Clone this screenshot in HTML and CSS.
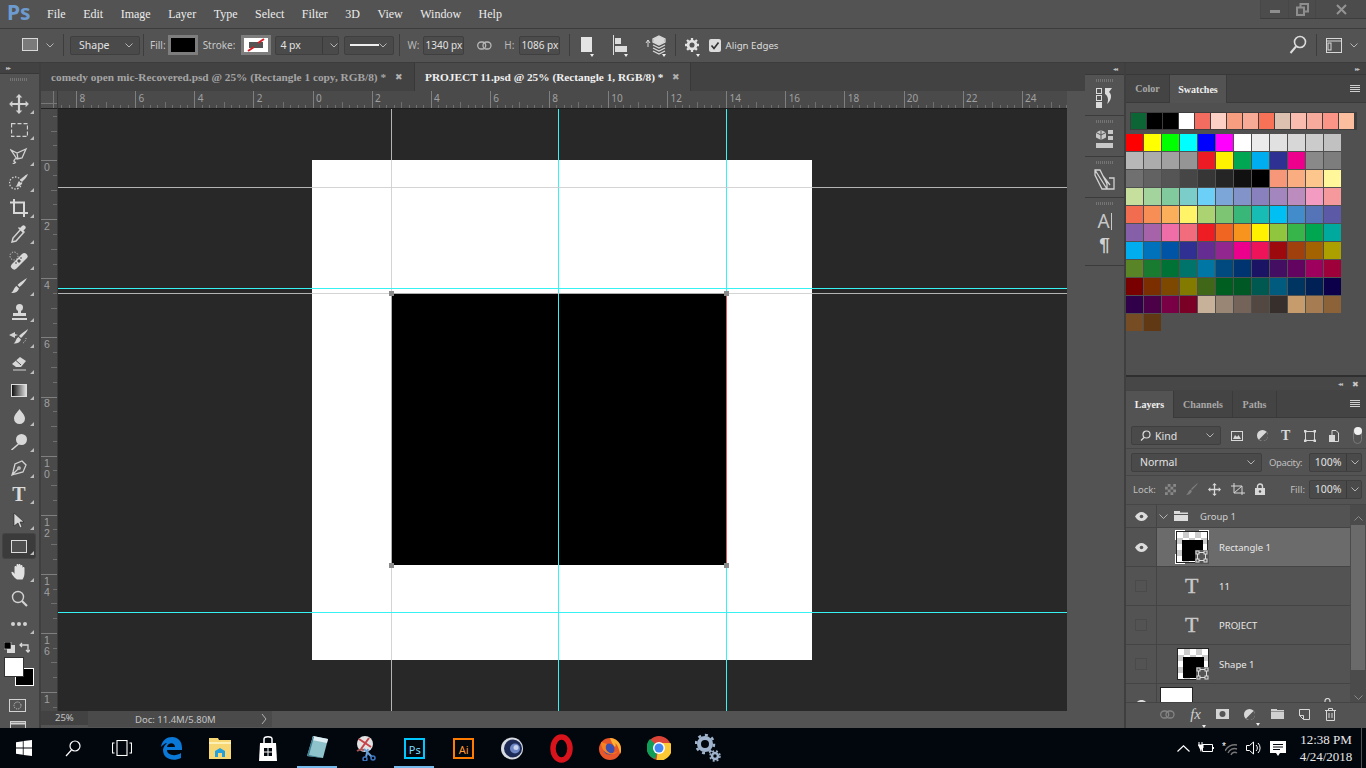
FILE: index.html
```html
<!DOCTYPE html>
<html lang="en">
<head>
<meta charset="utf-8">
<title>Photoshop</title>
<link rel="stylesheet" href="styles.css">
</head>
<body>
<div class="app">
  <header class="menubar">
    <div class="logo">Ps</div>
    <nav class="menu"><span>File</span><span>Edit</span><span>Image</span><span>Layer</span><span>Type</span><span>Select</span><span>Filter</span><span>3D</span><span>View</span><span>Window</span><span>Help</span></nav>
    <div class="winctl">
      <div class="wbtn wmin"><svg width="10" height="10" viewBox="0 0 10 10"><rect y="6" width="10" height="3" fill="#8e8e8e"/></svg></div>
      <div class="wbtn wres"><svg width="13" height="13" viewBox="0 0 13 13" fill="none" stroke="#8e8e8e" stroke-width="2"><rect x="4.500" y="1" width="7.500" height="7.500"/><rect x="1" y="4.500" width="7" height="7.500" fill="#535353"/></svg></div>
      <div class="wbtn wcls"><svg width="11" height="11" viewBox="0 0 11 11" stroke="#949494" stroke-width="2"><path d="M1 1l9 9M10 1l-9 9"/></svg></div>
    </div>
  </header>

  <section class="options">
    <svg class="opt-tool" width="17" height="14" viewBox="0 0 17 14"><rect x=".5" y=".5" width="15" height="12" fill="#7a7a7a" stroke="#d8d8d8"/></svg>
    <svg class="chev chev-tool" width="8" height="5" viewBox="0 0 8 5"><path d="M.5.5L4 4 7.500.5" fill="none" stroke="#b5b5b5"/></svg>
    <i class="sep sep-a"></i>
    <div class="field f-shape"><span>Shape</span><svg class="chev" width="8" height="5" viewBox="0 0 8 5"><path d="M.5.5L4 4 7.500.5" fill="none" stroke="#b5b5b5"/></svg></div>
    <i class="sep sep-b"></i>
    <span class="lbl l-fill">Fill:</span>
    <div class="colorbox cb-fill"></div>
    <span class="lbl l-stroke">Stroke:</span>
    <div class="colorbox cb-stroke"><svg width="24" height="14" viewBox="0 0 24 14"><rect width="24" height="14" fill="#fff"/><rect x="5" y="4" width="14" height="6" fill="#555"/><path d="M4 13l6-4M14 5l6-4" stroke="#d81f26" stroke-width="2"/></svg></div>
    <div class="field f-px"><span>4 px</span><b></b><svg class="chev" width="8" height="5" viewBox="0 0 8 5"><path d="M.5.5L4 4 7.500.5" fill="none" stroke="#b5b5b5"/></svg></div>
    <div class="field f-line"><u></u><svg class="chev" width="8" height="5" viewBox="0 0 8 5"><path d="M.5.5L4 4 7.500.5" fill="none" stroke="#b5b5b5"/></svg></div>
    <i class="sep sep-c"></i>
    <span class="lbl l-w">W:</span>
    <div class="field f-num f-w"><span>1340 px</span></div>
    <svg class="link-ic" width="15" height="9" viewBox="0 0 15 9" fill="none" stroke="#b8b8b8" stroke-width="1.300"><rect x=".7" y="1" width="8" height="7" rx="3.500"/><rect x="6" y="1" width="8" height="7" rx="3.500"/></svg>
    <span class="lbl l-h">H:</span>
    <div class="field f-num f-h"><span>1086 px</span></div>
    <i class="sep sep-d"></i>
    <div class="opt-ic oi-a"><svg width="11" height="16" viewBox="0 0 11 16"><rect width="11" height="15" fill="#e4e4e4"/></svg><em></em></div>
    <div class="opt-ic oi-b"><svg width="14" height="20" viewBox="0 0 14 20" fill="#dcdcdc"><rect width="1" height="20"/><rect x="2" y="3" width="6" height="6"/><rect x="2" y="11" width="12" height="6"/></svg><em></em></div>
    <div class="opt-ic oi-c"><svg width="22" height="20" viewBox="0 0 22 20" fill="none" stroke="#d8d8d8"><path d="M1 8l2-3 2 3M3 5v7" stroke-width="1"/><path d="M14 1l6 3v3l-6 3-6-3V4zM8 10l6 3 6-3M8 13l6 3 6-3M8 16l6 3 6-3" stroke-width="1.300"/><path d="M9 4l5-2.500L19 4v3l-5 2.500L9 7z" fill="#d8d8d8"/></svg><em></em></div>
    <i class="sep sep-e"></i>
    <div class="opt-ic oi-d"><svg width="14" height="16" viewBox="0 0 16 16"><circle cx="8" cy="8" r="4.500" fill="none" stroke="#e2e2e2" stroke-width="3.200"/><path d="M8 0v16M0 8h16M2.300 2.300l11.400 11.400M13.700 2.300L2.300 13.700" stroke="#e2e2e2" stroke-width="2.600" stroke-dasharray="2.500 11"/></svg><em></em></div>
    <svg class="chk" width="12" height="13" viewBox="0 0 12 13"><rect width="12" height="13" rx="2" fill="#dcdcdc"/><path d="M2.500 6.500l2.500 3 4.500-6" fill="none" stroke="#333" stroke-width="1.700"/></svg>
    <span class="lbl l-align">Align Edges</span>
    <div class="opt-right">
      <svg width="18" height="20" viewBox="0 0 18 20" fill="none" stroke="#dcdcdc" stroke-width="1.600"><circle cx="11" cy="7" r="5.500"/><path d="M7 11.500L1.500 18" stroke-width="2"/></svg>
      <i class="sep sep-f"></i>
      <svg width="16" height="15" viewBox="0 0 16 15" fill="none" stroke="#d8d8d8"><rect x=".5" y=".5" width="15" height="14"/><rect x="2" y="5" width="3" height="7" stroke-width="1"/><path d="M.5 3h15"/></svg>
      <svg class="chev" width="8" height="5" viewBox="0 0 8 5"><path d="M.5.5L4 4 7.500.5" fill="none" stroke="#b5b5b5"/></svg>
    </div>
  </section>

  <main class="work">
    <aside class="tools">
      <div class="strip"><span class="arrows">▸▸</span></div>
      <div class="grip"></div>
      <div class="tool more"><svg width="22" height="22" viewBox="0 0 20 20" fill="#d2d2d2"><path d="M10 1l3 3h-2v5h5V7l3 3-3 3v-2h-5v5h2l-3 3-3-3h2v-5H4v2l-3-3 3-3v2h5V4H7z"/></svg></div>
      <div class="tool more"><svg width="17" height="14" viewBox="0 0 17 14" fill="none" stroke="#d2d2d2"><rect x=".5" y=".5" width="16" height="13" stroke-dasharray="4 2" stroke-width="1.300"/></svg></div>
      <div class="tool more"><svg width="18" height="18" viewBox="0 0 18 18" fill="none" stroke="#d2d2d2" stroke-width="1.300"><path d="M1 3l6 3 9-4-4 9-5 1zM7 11c-3 1-4 4-2 4 2 1-2 1-2 2M7 6l1 6"/></svg></div>
      <div class="tool more"><svg width="20" height="19" viewBox="0 0 20 19"><circle cx="6.500" cy="10" r="6" fill="none" stroke="#d2d2d2" stroke-dasharray="1.500 1.500" stroke-width="1.300"/><path d="M19 1c-1 3-4 6-6 8l-2-2c2-2 5-5 8-6zM10 8l2.500 2.500c-1 3-4 3.500-6 3 2-1 2-4 3.500-5.500z" fill="#d2d2d2"/></svg></div>
      <div class="tool more"><svg width="18" height="18" viewBox="0 0 18 18" fill="none" stroke="#d8d8d8" stroke-width="2"><path d="M0 3.500h14V18M4 0v14h14"/></svg></div>
      <div class="tool more"><svg width="16" height="18" viewBox="0 0 16 18"><path d="M10 4l3 3-8 9-4 1 1-4z" fill="none" stroke="#d2d2d2" stroke-width="1.500"/><path d="M9 3l2-2c1-1 2-1 3 0s1 2 0 3l-2 2 1 1-1 1-5-5 1-1z" fill="#d8d8d8"/></svg></div>
      <div class="tool more"><svg width="20" height="19" viewBox="0 0 20 19"><circle cx="5" cy="5" r="4" fill="none" stroke="#d2d2d2" stroke-dasharray="1.200 1.500"/><path d="M3 13L13 3c1.500-1.500 3-1.500 4.500 0s1.500 3 0 4.500L7.500 17.500C6 19 4.500 19 3 17.500s-1.500-3 0-4.500z" fill="#d8d8d8"/><path d="M8 10l2-2 2 2-2 2zM6 12l1-1 1 1-1 1zM11 7l1-1 1 1-1 1z" fill="#4c4c4c"/></svg></div>
      <div class="tool more"><svg width="16" height="16" viewBox="0 0 16 16" fill="#d8d8d8"><path d="M16 0c-1.500 3-5 7-7.500 9L6.500 7C9 4.500 13 1.500 16 0zM5.500 8L8 10.500C7 14 3.500 15.500 0 15c2.500-1 2.500-5 5.500-7z"/></svg></div>
      <div class="tool more"><svg width="15" height="16" viewBox="0 0 15 16" fill="#d8d8d8"><circle cx="7.500" cy="3.500" r="3.500"/><rect x="6" y="5" width="3" height="5"/><rect x="1" y="9" width="13" height="3"/><rect y="14" width="15" height="2"/></svg></div>
      <div class="tool more"><svg width="20" height="18" viewBox="0 0 20 18"><path d="M19 0c-1 3-5 7-7 9l-2-2c2-2 6-5 9-7zM9.500 8l2.500 2.500c-1 3-4 4.500-7.500 4 2.500-1 2-5 5-6.500z" fill="#d8d8d8"/><path d="M0 6l6-3v2l3 1-3 1v2z" fill="#d2d2d2"/><path d="M14 14a6 6 0 0 0 3-6" stroke="#d2d2d2" stroke-dasharray="1 1.500" fill="none"/></svg></div>
      <div class="tool more"><svg width="16" height="14" viewBox="0 0 16 14"><path d="M9 0l6 4-5 6H5L1 7z" fill="#d8d8d8"/><path d="M5 3.500L10 8" stroke="#4c4c4c" stroke-width="1"/><path d="M2 13h13" stroke="#d2d2d2"/></svg></div>
      <div class="tool more"><div class="gradient-ic"></div></div>
      <div class="tool more"><svg width="11" height="15" viewBox="0 0 11 15" fill="#d8d8d8"><path d="M5.500 0c2 3 5.500 6 5.500 9.500a5.500 5.500 0 0 1-11 0C0 6 3.500 3 5.500 0z"/></svg></div>
      <div class="tool more"><svg width="16" height="16" viewBox="0 0 16 16" fill="#d8d8d8"><circle cx="10.500" cy="5.500" r="5.500"/><path d="M7 9.500l1 1-7 6-1-1z"/></svg></div>
      <div class="tool more"><svg width="16" height="16" viewBox="0 0 16 16" fill="none" stroke="#d2d2d2" stroke-width="1.300"><path d="M11 1l4 4-3 7-8 2-3 1 1-3 2-8zM2 14l5-5"/><circle cx="8" cy="8" r="1.200"/></svg></div>
      <div class="tool more"><span class="t-glyph">T</span></div>
      <div class="tool more"><svg width="12" height="16" viewBox="0 0 12 16" fill="#d8d8d8" stroke="#222" stroke-width=".6"><path d="M1 1l10 9H7l2 5-2 1-2-5-4 3z"/></svg></div>
      <div class="tool more active"><svg width="16" height="13" viewBox="0 0 16 13"><rect x=".5" y=".5" width="15" height="12" fill="#4f4f4f" stroke="#dcdcdc"/></svg></div>
      <div class="tool more"><svg width="17" height="18" viewBox="0 0 17 18" fill="#e0e0e0"><path d="M4 15C2 13 0 10 .5 9c.7-.8 2 0 3 2V4c0-1.500 2-1.500 2 0V2c0-1.500 2-1.500 2 0v0c0-1.500 2-1.500 2 0v1c0-1.500 2-1.500 2 0v2c0-1.500 2-1.500 2 0v5c0 3-1 5-2 6.500H6z"/></svg></div>
      <div class="tool"><svg width="17" height="17" viewBox="0 0 17 17" fill="none" stroke="#d2d2d2"><circle cx="7" cy="7" r="5.500" stroke-width="1.400"/><path d="M11 11l5 5" stroke-width="2.200"/></svg></div>
      <div class="tool more"><svg width="16" height="4" viewBox="0 0 16 4" fill="#d2d2d2"><circle cx="2" cy="2" r="2"/><circle cx="8" cy="2" r="2"/><circle cx="14" cy="2" r="2"/></svg></div>
      <div class="swaprow">
        <svg width="11" height="11" viewBox="0 0 11 11"><rect x="3" y="3" width="8" height="8" fill="#d8d8d8"/><rect width="7" height="7" fill="#000" stroke="#ddd" stroke-width=".6"/></svg>
        <svg width="11" height="11" viewBox="0 0 11 11" fill="none" stroke="#d8d8d8"><path d="M1 3h8v7M3 1L1 3l2 2M7 8l2 2 2-2" stroke-width="1.300"/></svg>
      </div>
      <div class="fgbg"><div class="bgc"></div><div class="fgc"></div></div>
      <div class="mask-ic"><svg width="17" height="13" viewBox="0 0 17 13" fill="none" stroke="#d2d2d2"><rect x=".5" y=".5" width="16" height="12"/><circle cx="8.500" cy="6.500" r="3.500" stroke-dasharray="1 1"/></svg></div>
      <div class="screen-ic"><svg width="16" height="12" viewBox="0 0 16 12" fill="none" stroke="#d2d2d2"><rect x=".5" y=".5" width="15" height="11"/><path d="M1 2.500h14" stroke-width="2"/></svg></div>
    </aside>

    <section class="doc">
      <div class="tabs">
        <div class="tab"><span>comedy open mic-Recovered.psd @ 25% (Rectangle 1 copy, RGB/8) *</span><b>✖</b></div>
        <div class="tab on"><span>PROJECT 11.psd @ 25% (Rectangle 1, RGB/8) *</span><b>✖</b></div>
      </div>
      <div class="hrow">
        <div class="corner"></div>
        <div class="hruler"><div class="hscale">
          <span></span><span>8</span><span>6</span><span>4</span><span>2</span><span>0</span><span>2</span><span>4</span><span>6</span><span>8</span><span>10</span><span>12</span><span>14</span><span>16</span><span>18</span><span>20</span><span>22</span><span>24</span>
        </div></div>
        <div class="lane"></div>
      </div>
      <div class="vrow">
        <div class="vruler"><div class="vscale">
          <span></span><span>0</span><span>2</span><span>4</span><span>6</span><span>8</span><span>1<br>0</span><span>1<br>2</span><span>1<br>4</span><span>1<br>6</span><span>1</span>
        </div></div>
        <div class="canvas">
          <div class="paper"><div class="shape"></div></div>
          <i class="gv gg x1"></i><i class="gv gc x2"></i><i class="gv gc x3"></i>
          <i class="gh gg y1"></i><i class="gh gc y2"></i><i class="gh gg y3"></i><i class="gh gc y4"></i>
          <i class="path-edge"></i>
          <i class="hdl h1"></i><i class="hdl h2"></i><i class="hdl h3"></i><i class="hdl h4"></i>
        </div>
        <div class="lane"></div>
      </div>
      <div class="status">
        <div class="zoomv">25%</div>
        <div class="docinfo"><span>Doc: 11.4M/5.80M</span><svg width="6" height="12" viewBox="0 0 6 12"><path d="M1 1l4 5-4 5" fill="none" stroke="#b0b0b0"/></svg></div>
      </div>
    </section>

    <aside class="dock">
      <div class="strip dockstrip"><span class="arrows">◂◂</span></div>
      <div class="dgroup"><div class="grip"></div><svg width="20" height="21" viewBox="0 0 20 21"><g fill="none" stroke="#dcdcdc"><rect x="1.500" y="1.500" width="5" height="5"/><rect x="1.500" y="8.500" width="5" height="5"/></g><rect x="1" y="15" width="6" height="6" fill="#dcdcdc"/><path d="M10 1h7l-3 4c3 2 3 8-2 12 2-4 1-8-2-10z" fill="#dcdcdc"/></svg></div>
      <div class="dgroup"><div class="grip"></div><svg width="17" height="22" viewBox="0 0 17 22" fill="#c8c8c8"><path d="M5 2l5 2.500v5L5 12 0 9.500v-5z"/><path d="M5 2v10M0 4.500l5 2.500 5-2.500" stroke="#555" fill="none"/><rect x="12" y="2" width="5" height="4"/><rect x="12" y="8" width="5" height="4"/><rect y="15" width="17" height="5"/></svg></div>
      <div class="dgroup"><div class="grip"></div><svg width="22" height="21" viewBox="0 0 22 21" fill="none" stroke="#d2d2d2" stroke-width="1.300"><path d="M1 1h5l7 14v5H8L1 6zM1 1l12 19M9 7l7 9M15 9h5v11h-7"/></svg></div>
      <div class="dgroup dtxt"><div class="grip"></div><div class="aglyph">A<i></i></div><div class="pil">¶</div></div>
    </aside>

    <aside class="panels">
      <div class="strip panstrip"><span class="arrows">▸▸</span></div>
      <div class="ptabs">
        <span class="ptab pt-color">Color</span><span class="ptab pt-swatch on">Swatches</span>
        <div class="hamb"><i></i><i></i><i></i><i></i></div>
      </div>
      <div class="swatches">
        <div class="recent">
          <i style="background:#0b6534"></i><i style="background:#000"></i><i style="background:#000"></i><i style="background:#fff"></i><i style="background:#f26c5f"></i><i style="background:#fcd0c4"></i><i style="background:#f79d80"></i><i style="background:#f7aa95"></i><i style="background:#f87258"></i><i style="background:#dcc0b0"></i><i style="background:#fbbcb0"></i><i style="background:#f7ab9c"></i><i style="background:#fa9587"></i><i style="background:#fbbfa0"></i>
        </div>
        <div class="swgrid">
          <i style="background:#f00"></i><i style="background:#ff0"></i><i style="background:#0f0"></i><i style="background:#0ff"></i><i style="background:#00f"></i><i style="background:#f0f"></i><i style="background:#fff"></i><i style="background:#ebebeb"></i><i style="background:#e1e1e1"></i><i style="background:#d7d7d7"></i><i style="background:#cbcbcb"></i><i style="background:#c1c1c1"></i>
          <i style="background:#b7b7b7"></i><i style="background:#acacac"></i><i style="background:#a1a1a1"></i><i style="background:#959595"></i><i style="background:#ed1c24"></i><i style="background:#fff200"></i><i style="background:#00a651"></i><i style="background:#00aeef"></i><i style="background:#2e3192"></i><i style="background:#ec008c"></i><i style="background:#898989"></i><i style="background:#7d7d7d"></i>
          <i style="background:#707070"></i><i style="background:#626262"></i><i style="background:#555"></i><i style="background:#464646"></i><i style="background:#363636"></i><i style="background:#252525"></i><i style="background:#111"></i><i style="background:#000"></i><i style="background:#f7977a"></i><i style="background:#fbad82"></i><i style="background:#fdc68c"></i><i style="background:#fff799"></i>
          <i style="background:#c6df9c"></i><i style="background:#a4d49d"></i><i style="background:#81ca9d"></i><i style="background:#7bcdc9"></i><i style="background:#6ccff7"></i><i style="background:#7ca6d8"></i><i style="background:#8293ca"></i><i style="background:#8881be"></i><i style="background:#a286bd"></i><i style="background:#bc8cbf"></i><i style="background:#f49bc1"></i><i style="background:#f5999d"></i>
          <i style="background:#f26c4f"></i><i style="background:#f68e55"></i><i style="background:#fbaf5a"></i><i style="background:#fff467"></i><i style="background:#acd372"></i><i style="background:#7dc473"></i><i style="background:#39b778"></i><i style="background:#17bcb4"></i><i style="background:#00bff3"></i><i style="background:#438ccb"></i><i style="background:#5573b7"></i><i style="background:#5c5aa7"></i>
          <i style="background:#855fa8"></i><i style="background:#a763a9"></i><i style="background:#ef6ea8"></i><i style="background:#f16d7e"></i><i style="background:#ee1d24"></i><i style="background:#f16522"></i><i style="background:#f7941d"></i><i style="background:#fff100"></i><i style="background:#8fc63d"></i><i style="background:#37b44a"></i><i style="background:#00a650"></i><i style="background:#00a99e"></i>
          <i style="background:#00aeef"></i><i style="background:#0072bc"></i><i style="background:#0054a5"></i><i style="background:#2f3091"></i><i style="background:#652c91"></i><i style="background:#91278f"></i><i style="background:#ec008c"></i><i style="background:#ed145a"></i><i style="background:#9d0a0e"></i><i style="background:#a0410d"></i><i style="background:#a26300"></i><i style="background:#aba000"></i>
          <i style="background:#598527"></i><i style="background:#197b30"></i><i style="background:#007236"></i><i style="background:#00736a"></i><i style="background:#0076a4"></i><i style="background:#004a80"></i><i style="background:#003471"></i><i style="background:#1b1464"></i><i style="background:#440e62"></i><i style="background:#630460"></i><i style="background:#9e005d"></i><i style="background:#9e0039"></i>
          <i style="background:#790000"></i><i style="background:#7b2e00"></i><i style="background:#7d4900"></i><i style="background:#827b00"></i><i style="background:#406618"></i><i style="background:#005e20"></i><i style="background:#005825"></i><i style="background:#005951"></i><i style="background:#005b7e"></i><i style="background:#003562"></i><i style="background:#002056"></i><i style="background:#0c004b"></i>
          <i style="background:#30004a"></i><i style="background:#4b0048"></i><i style="background:#7a0045"></i><i style="background:#7a0026"></i><i style="background:#c7b299"></i><i style="background:#998675"></i><i style="background:#736358"></i><i style="background:#534741"></i><i style="background:#362f2c"></i><i style="background:#c69c6d"></i><i style="background:#a67c52"></i><i style="background:#8c6239"></i>
          <i style="background:#754c24"></i><i style="background:#603813"></i>
        </div>
      </div>
      <div class="splitter"></div>
      <div class="layhead"><span class="arrows">◂◂</span><b>✖</b></div>
      <div class="ptabs laytabs">
        <span class="ptab pt-layers on">Layers</span><span class="ptab pt-chan">Channels</span><span class="ptab pt-paths">Paths</span>
        <div class="hamb"><i></i><i></i><i></i><i></i></div>
      </div>
      <div class="lay-filter">
        <div class="field f-kind"><svg width="11" height="11" viewBox="0 0 11 11" fill="none" stroke="#dcdcdc" stroke-width="1.200"><circle cx="6.500" cy="4.500" r="3.500"/><path d="M4 7.500L1 10.500"/></svg><span>Kind</span><svg class="chev" width="8" height="5" viewBox="0 0 8 5"><path d="M.5.5L4 4 7.500.5" fill="none" stroke="#b5b5b5"/></svg></div>
        <div class="kinds">
          <svg width="12" height="10" viewBox="0 0 12 10"><rect x=".5" y=".5" width="11" height="9" fill="none" stroke="#d8d8d8"/><path d="M2 8l2-4 2 2 1.500-2L10 8z" fill="#d8d8d8"/></svg>
          <svg width="11" height="11" viewBox="0 0 11 11"><circle cx="5.500" cy="5.500" r="5.500" fill="#d8d8d8"/><path d="M2 9.500L9.500 2a5 5 0 0 1-7.500 7.500z" fill="#555"/></svg>
          <span class="kt">T</span>
          <svg width="12" height="12" viewBox="0 0 12 12" fill="none" stroke="#d8d8d8"><rect x="1.500" y="1.500" width="9" height="9"/><g fill="#d8d8d8" stroke="none"><rect width="2.500" height="2.500"/><rect x="9.500" width="2.500" height="2.500"/><rect y="9.500" width="2.500" height="2.500"/><rect x="9.500" y="9.500" width="2.500" height="2.500"/></g></svg>
          <svg width="10" height="12" viewBox="0 0 10 12"><path d="M3 .5h4l2.500 2.500v8.500H3z" fill="none" stroke="#d8d8d8"/><rect y="5" width="6" height="7" fill="#d8d8d8"/></svg>
        </div>
        <div class="toggle"><i></i></div>
      </div>
      <div class="lay-blend">
        <div class="field f-normal"><span>Normal</span><svg class="chev" width="8" height="5" viewBox="0 0 8 5"><path d="M.5.5L4 4 7.500.5" fill="none" stroke="#b5b5b5"/></svg></div>
        <span class="lbl2 op">Opacity:</span>
        <div class="field f-pct"><span>100%</span><b></b><svg class="chev" width="8" height="5" viewBox="0 0 8 5"><path d="M.5.5L4 4 7.500.5" fill="none" stroke="#b5b5b5"/></svg></div>
      </div>
      <div class="lay-lock">
        <span class="lbl2 lk">Lock:</span>
        <div class="locks">
          <i class="checker lk-c"></i>
          <svg width="12" height="12" viewBox="0 0 12 12" fill="#7d7d7d"><path d="M12 0C11 2 8 5 6 7L5 6c2-2 5-5 7-6zM4.500 6.500L6 8c-1 2.500-3 4-6 4 2-1 2-4 4.500-5.500z"/></svg>
          <svg width="13" height="13" viewBox="0 0 20 20" fill="#d8d8d8"><path d="M10 0l3.500 3.500H11V9h5.500V6.500L20 10l-3.500 3.500V11H11v5.500h2.500L10 20l-3.500-3.500H9V11H3.500v2.500L0 10l3.500-3.500V9H9V3.500H6.500z"/></svg>
          <svg width="14" height="13" viewBox="0 0 14 13" fill="none" stroke="#d8d8d8"><path d="M0 3h11v9M3 0v10h11" stroke-width="1"/><path d="M3 10l8-7" stroke-width="1"/></svg>
          <svg width="10" height="12" viewBox="0 0 10 12"><path d="M2.500 6V3.500a2.500 2.500 0 0 1 5 0V6" fill="none" stroke="#d8d8d8" stroke-width="1.400"/><rect y="5" width="10" height="7" fill="#d8d8d8"/><circle cx="5" cy="8.500" r="1.200" fill="#555"/></svg>
        </div>
        <span class="lbl2 fl">Fill:</span>
        <div class="field f-pct"><span>100%</span><b></b><svg class="chev" width="8" height="5" viewBox="0 0 8 5"><path d="M.5.5L4 4 7.500.5" fill="none" stroke="#b5b5b5"/></svg></div>
      </div>
      <div class="lay-list">
        <div class="rows">
          <div class="lrow group">
            <div class="vis"><svg class="eye" width="13" height="9" viewBox="0 0 13 9"><path d="M0 4.500C2 1.500 4 0 6.500 0S11 1.500 13 4.500C11 7.500 9 9 6.500 9S2 7.500 0 4.500z" fill="#dcdcdc"/><circle cx="6.500" cy="4.500" r="1.800" fill="#555"/></svg></div>
            <svg class="chev gchev" width="9" height="5" viewBox="0 0 9 5"><path d="M.5.500L4.500 4.500 8.500.5" fill="none" stroke="#b5b5b5"/></svg>
            <svg class="folder" width="14" height="10" viewBox="0 0 14 10" fill="#dcdcdc"><path d="M0 0h6v1.500h8V3H0zM0 4h14v6H0z"/></svg>
            <span class="lname gname">Group 1</span>
          </div>
          <div class="lrow tall sel">
            <div class="vis"><svg class="eye" width="13" height="9" viewBox="0 0 13 9"><path d="M0 4.500C2 1.500 4 0 6.500 0S11 1.500 13 4.500C11 7.500 9 9 6.500 9S2 7.500 0 4.500z" fill="#dcdcdc"/><circle cx="6.500" cy="4.500" r="1.800" fill="#555"/></svg></div>
            <div class="thumbwrap sel-th"><div class="thumb"><i class="blk"></i></div><em class="smark"><svg width="13" height="13" viewBox="0 0 13 13" fill="none" stroke="#ddd"><rect x="2.500" y="2.500" width="8" height="8"/><g fill="#555"><rect x="1" y="1" width="3" height="3"/><rect x="9" y="1" width="3" height="3"/><rect x="1" y="9" width="3" height="3"/><rect x="9" y="9" width="3" height="3"/></g></svg></em></div>
            <span class="lname">Rectangle 1</span>
          </div>
          <div class="lrow tall">
            <div class="vis"><i class="vbox"></i></div>
            <span class="tglyph">T</span>
            <span class="lname">11</span>
          </div>
          <div class="lrow tall">
            <div class="vis"><i class="vbox"></i></div>
            <span class="tglyph">T</span>
            <span class="lname">PROJECT</span>
          </div>
          <div class="lrow tall">
            <div class="vis"><i class="vbox"></i></div>
            <div class="thumbwrap plain"><div class="thumb"><i class="blk"></i></div><em class="smark"><svg width="13" height="13" viewBox="0 0 13 13" fill="none" stroke="#ddd"><rect x="2.500" y="2.500" width="8" height="8"/><g fill="#555"><rect x="1" y="1" width="3" height="3"/><rect x="9" y="1" width="3" height="3"/><rect x="1" y="9" width="3" height="3"/><rect x="9" y="9" width="3" height="3"/></g></svg></em></div>
            <span class="lname">Shape 1</span>
          </div>
          <div class="lrow tall last">
            <div class="vis vis-end"><svg class="eye" width="13" height="9" viewBox="0 0 13 9"><path d="M0 4.500C2 1.500 4 0 6.500 0S11 1.500 13 4.500C11 7.500 9 9 6.500 9S2 7.500 0 4.500z" fill="#dcdcdc"/></svg></div>
            <div class="whitethumb"></div>
            <svg class="minilock" width="9" height="10" viewBox="0 0 9 10"><path d="M2 5V3a2.500 2.500 0 0 1 5 0v2" fill="none" stroke="#d8d8d8" stroke-width="1.200"/></svg>
          </div>
        </div>
        <div class="lscroll">
          <svg width="9" height="5" viewBox="0 0 9 5"><path d="M.5 4.500L4.500.5 8.500 4.500" fill="none" stroke="#888"/></svg>
          <div class="thumbbar"></div>
          <svg width="9" height="5" viewBox="0 0 9 5"><path d="M.5.500L4.500 4.500 8.500.5" fill="none" stroke="#888"/></svg>
        </div>
      </div>
      <div class="lay-foot">
        <svg width="15" height="9" viewBox="0 0 15 9" fill="none" stroke="#858585" stroke-width="1.300"><rect x=".7" y="1" width="8" height="7" rx="3.500"/><rect x="6" y="1" width="8" height="7" rx="3.500"/></svg>
        <span class="fx drop">fx</span>
        <svg width="13" height="10" viewBox="0 0 13 10"><rect width="13" height="10" fill="#d4d4d4"/><circle cx="6.500" cy="5" r="3" fill="#555"/></svg>
        <span class="adj drop"><svg width="11" height="11" viewBox="0 0 11 11"><circle cx="5.500" cy="5.500" r="5.500" fill="#d8d8d8"/><path d="M2 9.500L9.500 2a5 5 0 0 1-7.500 7.500z" fill="#555"/></svg></span>
        <svg width="13" height="10" viewBox="0 0 13 10" fill="#d0d0d0"><path d="M0 0h6v1h7v1H0zM0 2.500h13V10H0z"/></svg>
        <svg width="11" height="11" viewBox="0 0 11 11" fill="none" stroke="#d8d8d8"><path d="M.5.500h10v10h-6l-4-4z"/><path d="M4.500 10.500v-4h-4"/></svg>
        <svg width="11" height="13" viewBox="0 0 11 13" fill="none" stroke="#d8d8d8"><path d="M1.500 3v9.500h8V3M0 2.500h11M3.500 2V.5h4V2M4 5v5M7 5v5"/></svg>
      </div>
    </aside>
  </main>

  <footer class="taskbar">
    <div class="tb"><svg width="16" height="16" viewBox="0 0 16 16" fill="#fff"><path d="M0 2.200l6.800-1v6.400H0zM7.600 1.100L16 0v7.600H7.600zM0 8.400h6.800v6.400l-6.800-1zM7.600 8.400H16V16l-8.400-1.100z"/></svg></div>
    <div class="tb"><svg width="16" height="17" viewBox="0 0 16 17" fill="none" stroke="#fff" stroke-width="1.200"><circle cx="10" cy="6" r="5"/><path d="M6.500 10L1 16"/></svg></div>
    <div class="tb"><svg width="20" height="16" viewBox="0 0 20 16" fill="none" stroke="#fff" stroke-width="1.100"><rect x="5" y=".5" width="10" height="15"/><path d="M2.500 3H.5v10h2M17.500 3h2v10h-2"/></svg></div>
    <div class="tb"><svg width="22" height="24" viewBox="0 0 22 24"><path d="M1 11C2 4 7 1 12 1c6 0 10 4 10 11v2H7c0 5 8 7 14 3v5c-8 4-18 1-18-8 0-3 2-5 4-7-2 0-4 2-6 4zm6 0h8c0-5-7-5-8 0z" fill="#0a78d7"/></svg></div>
    <div class="tb"><svg width="22" height="22" viewBox="0 0 22 22"><path d="M0 1h9l1 2h12v19H0z" fill="#f7d774"/><path d="M0 5h22v2H0z" fill="#fdf0b5"/><path d="M6 20v-6l5-3 5 3v6h-3v-4H9v4z" fill="#26a0da"/></svg></div>
    <div class="tb"><svg width="20" height="25" viewBox="0 0 20 25"><path d="M2 7h16l1 18H1z" fill="#fff"/><path d="M6 7V3c0-3 8-3 8 0v4" fill="none" stroke="#fff" stroke-width="1.500"/><path d="M6 12h3.500v3.500H6zM10.500 12H14v3.500h-3.500zM6 16.500h3.500V20H6zM10.500 16.500H14V20h-3.500z" fill="#02060d"/></svg></div>
    <div class="tb act"><svg width="22" height="26" viewBox="0 0 22 26"><path d="M7 1l15 3-5 19L1 21z" fill="#8fc3cc"/><path d="M7 1l15 3-1 4L6 5z" fill="#dfeef2"/><path d="M1 21l6-20 1 1-5 18 14 3z" fill="#3d7c8f"/></svg></div>
    <div class="tb"><svg width="22" height="26" viewBox="0 0 22 26"><circle cx="10" cy="9" r="8" fill="#e3e3e3"/><path d="M4 4l12 8M14 3L6 14" stroke="#c7434a" stroke-width="2"/><path d="M9 14l8 8M13 14l-2 8" stroke="#6ca0d8" stroke-width="2"/><circle cx="18" cy="23" r="2" fill="none" stroke="#3b78c4" stroke-width="1.500"/><circle cx="10" cy="24" r="2" fill="none" stroke="#3b78c4" stroke-width="1.500"/><path d="M2 16c3-2 5-2 7-1" stroke="#a55" stroke-width="2" fill="none"/></svg></div>
    <div class="tb act"><div class="appbox ps">Ps</div></div>
    <div class="tb"><div class="appbox ai">Ai</div></div>
    <div class="tb"><svg width="24" height="31" viewBox="0 0 24 24"><circle cx="12" cy="12" r="11" fill="#d8dbe2"/><circle cx="13" cy="12" r="9" fill="#1d2a55"/><circle cx="15" cy="12" r="5" fill="#6f86c4"/><circle cx="16" cy="11" r="2.500" fill="#c8d3ee"/></svg></div>
    <div class="tb"><svg width="23" height="29" viewBox="0 0 23 29"><ellipse cx="11.500" cy="14.500" rx="8.500" ry="11.500" fill="none" stroke="#d8131b" stroke-width="5.500"/></svg></div>
    <div class="tb"><svg width="24" height="28" viewBox="0 0 24 28"><circle cx="12" cy="15" r="11" fill="#e8562a"/><path d="M12 4c5 0 11 4 11 11 0 2 0 4-1 5-1-5-2-9-5-11 1 2 1 3 0 4-2-2-4-6-5-9z" fill="#f9b233"/><circle cx="11" cy="15" r="5.500" fill="#3a4fb0"/><path d="M3 8c0 6 4 13 11 12 3 0 6-2 7-5-1 3-6 5-9 4-5-2-5-7-3-9-2-1-4-1-6-2z" fill="#f58220"/></svg></div>
    <div class="tb"><svg width="24" height="24" viewBox="0 0 24 24"><circle cx="12" cy="12" r="12" fill="#dc4437"/><path d="M12 12L3 3a12 12 0 0 0 5 20z" fill="#109d58"/><path d="M12 7h11.500a12 12 0 0 1-14 17z" fill="#fcc934"/><circle cx="12" cy="12" r="6" fill="#fff"/><circle cx="12" cy="12" r="4.500" fill="#4285f4"/></svg></div>
    <div class="tb"><svg width="26" height="30" viewBox="0 0 26 30" fill="none" stroke="#9fb4cc"><circle cx="10" cy="11" r="6" stroke-width="4"/><circle cx="10" cy="11" r="9" stroke-width="2.500" stroke-dasharray="3 4"/><circle cx="20" cy="23" r="3" stroke-width="2.500"/><circle cx="20" cy="23" r="5" stroke-width="1.500" stroke-dasharray="2 2"/></svg></div>
    <div class="tray">
      <svg width="13" height="7" viewBox="0 0 13 7" fill="none" stroke="#fff" stroke-width="1.200"><path d="M.5 6.500L6.500 .8l6 5.700"/></svg>
      <svg width="16" height="14" viewBox="0 0 16 14" fill="none" stroke="#fff"><path d="M4.500 3.500h10v7h-10zM15.500 6v2"/><path d="M1 1v3M4 1v3" stroke-width="1"/><path d="M0 4h5v3l-2 1.500v2" fill="#fff"/></svg>
      <div class="wifi"><span class="star">*</span><svg width="13" height="12" viewBox="0 0 13 12" fill="none" stroke="#777" stroke-width="1.400"><path d="M0 7a11 11 0 0 1 12-6M3 9a7 7 0 0 1 9-4M6 11a4 4 0 0 1 6-2"/></svg></div>
      <svg width="16" height="14" viewBox="0 0 16 14" fill="none" stroke="#fff"><path d="M.5 4.500h3L7.500 1v12l-4-3.500h-3z"/><path d="M10 4a4 4 0 0 1 0 6M12 2a7 7 0 0 1 0 10"/></svg>
      <svg class="note" width="16" height="15" viewBox="0 0 16 15"><path d="M0 0h16v12H10l-2 3-2-3H0z" fill="#fff"/><path d="M3 3.500h10M3 6h10M3 8.500h7" stroke="#02060d"/></svg>
      <div class="clock"><span>12:38 PM</span><span>4/24/2018</span></div>
      <i class="showdesk"></i>
    </div>
  </footer>
</div>
</body>
</html>
```
FILE: styles.css
```css
* { box-sizing: border-box; }
html, body { margin: 0; padding: 0; background: #535353; }
body { width: 1366px; height: 768px; overflow: hidden; font-family: "Noto Sans", "Open Sans", sans-serif; color: #d8d8d8; }
i, em, b, u { display: block; font-style: normal; font-weight: normal; text-decoration: none; }
.app { width: 1366px; height: 768px; display: flex; flex-direction: column; }

/* menu bar */
.menubar { height: 29px; flex: none; display: flex; align-items: flex-start; background: #535353; border-bottom: 1px solid #3c3c3c; }
.logo { width: 47px; height: 28px; padding-left: 7px; font: bold 21px/25px "Noto Sans", sans-serif; color: #6d9bcf; }
.menu { display: flex; gap: 17.500px; height: 28px; align-items: center; font: 12px "Liberation Serif", serif; color: #ececec; }
.winctl { margin-left: auto; display: flex; height: 19px; background: #4c4c4c; border-bottom: 1px solid #3d3d3d; border-left: 1px solid #474747; }
.wbtn { display: flex; align-items: center; justify-content: center; height: 18px; border-right: 1px solid #474747; }
.wmin { width: 28px; } .wres { width: 27px; } .wcls { width: 50px; border: 0; }

/* options bar */
.options { height: 34px; flex: none; display: flex; align-items: center; padding-bottom: 1px; background: #535353; border-bottom: 1px solid #3c3c3c; font-size: 10px; }
.opt-tool { margin-left: 22px; }
.chev { flex: none; }
.chev-tool { margin-left: 7px; }
.sep { width: 1px; height: 22px; background: #3d3d3d; flex: none; }
.sep-a { margin-left: 9px; } .sep-b { margin-left: 3px; } .sep-c { margin-left: 5px; } .sep-d { margin-left: 9px; } .sep-e { margin-left: 7px; }
.sep-f { margin: 0 9px 0 9px; }
.field { display: flex; align-items: center; height: 19px; background: #4a4a4a; border: 1px solid #3f3f3f; border-radius: 2px; color: #e2e2e2; font-size: 10.500px; flex: none; position: relative; }
.field > b { width: 1px; align-self: stretch; background: #3a3a3a; }
.f-shape { width: 70px; margin-left: 6px; padding: 0 6px 0 8px; justify-content: space-between; }
.lbl { color: #c8c8c8; font-size: 10px; flex: none; }
.l-fill { margin-left: 6px; }
.colorbox { width: 30px; height: 20px; margin-left: 6px; background: #000; border: 3px solid #7d7d7d; flex: none; }
.cb-fill { margin-left: 2px; }
.cb-stroke { margin-left: 6px; border-width: 3px; display: flex; }
.l-stroke { margin-left: 5px; }
.f-px { width: 64px; margin-left: 4px; padding-left: 4px; }
.f-px span { width: 43px; }
.f-px .chev { margin-left: 7px; }
.f-line { width: 50px; margin-left: 5px; padding: 0 6px 0 5px; justify-content: space-between; }
.f-line u { width: 29px; height: 2px; background: #eee; }
.l-w { margin-left: 7px; color: #b8b8b8; }
.f-num { width: 41px; justify-content: center; background: #4c4c4c; font-size: 10px; }
.f-w { margin-left: 4px; }
.f-h { margin-left: 5px; }
.link-ic { margin-left: 13px; }
.l-h { margin-left: 12px; color: #b8b8b8; }
.opt-ic { position: relative; display: flex; justify-content: center; align-items: center; width: 20px; height: 24px; flex: none; }
.opt-ic em { position: absolute; right: 2px; bottom: 0; width: 0; height: 0; border: 2px solid transparent; border-top: 3px solid #eee; border-bottom: 0; }
.oi-a { margin-left: 6px; } .oi-b { margin-left: 14px; } .oi-c { margin-left: 14px; width: 24px; } .oi-d { margin-left: 6px; width: 20px; }
.chk { margin-left: 7px; flex: none; }
.l-align { margin-left: 4px; color: #dcdcdc; font-size: 9.700px; }
.opt-right { margin-left: auto; display: flex; align-items: center; padding-right: 8px; }
.opt-right .chev { margin-left: 8px; }

/* workspace */
.work { height: 665px; flex: none; display: flex; }
.strip { height: 12px; background: #424242; border-bottom: 1px solid #383838; display: flex; align-items: center; }
.arrows { font-size: 6px; letter-spacing: -1px; color: #bdbdbd; line-height: 10px; }
.grip { height: 3px; width: 18px; background: repeating-linear-gradient(90deg, #747474 0 1px, transparent 1px 2px); flex: none; }

/* toolbar */
.tools { width: 41px; flex: none; display: flex; flex-direction: column; border-right: 2px solid #3f3f3f; overflow: hidden; }
.tools .strip { padding-left: 6px; }
.tools .grip { margin: 4px 0 10px 10px; }
.tool { height: 26px; flex: none; margin: 0 4px 0 3px; display: flex; justify-content: center; align-items: center; position: relative; border-radius: 2px; }
.more::after { content: ""; position: absolute; right: 1px; bottom: 3px; border: 2px solid transparent; border-right-color: #bcbcbc; border-bottom-color: #bcbcbc; }
.tool.active { background: #3b3b3b; box-shadow: 0 0 0 1px #444; height: 24px; margin-top: 1px; margin-bottom: 1px; }
.gradient-ic { width: 16px; height: 13px; background: linear-gradient(90deg, #111, #ddd); border: 1px solid #ddd; }
.t-glyph { font: bold 20px/1 "Liberation Serif", serif; color: #dcdcdc; }
.swaprow { display: flex; justify-content: space-between; padding: 5px 9px 0 4px; height: 20px; flex: none; margin-top: 0; }
.fgbg { position: relative; height: 32px; flex: none; }
.fgc { position: absolute; left: 4px; top: 0; width: 20px; height: 20px; background: #fff; border: 1px solid #333; }
.bgc { position: absolute; left: 15px; top: 11px; width: 19px; height: 18px; background: #000; border: 1px solid #fff; }
.mask-ic { display: flex; justify-content: center; padding: 10px 4px 0 0; height: 30px; flex: none; }
.screen-ic { display: flex; justify-content: center; padding: 2px 4px 0 0; height: 20px; flex: none; }

/* document */
.doc { width: 1044px; flex: none; display: flex; flex-direction: column; }
.tabs { height: 28px; flex: none; display: flex; background: #424242; border-top: 0; font: bold 11.300px "Liberation Serif", serif; }
.tab { display: flex; align-items: center; width: 374px; padding-left: 10px; color: #a5a5a5; background: #424242; border-right: 1px solid #383838; white-space: nowrap; }
.tab b { margin-left: 9px; font-size: 9px; color: #b0b0b0; }
.tab.on { width: 276px; color: #f0f0f0; background: #4a4a4a; padding-left: 10px; }
.hrow { height: 18px; flex: none; display: flex; }
.corner { width: 17px; height: 18px; background: #4f4f4f; border-bottom: 1px solid #222; border-right: 1px solid #3a3a3a; background-image: linear-gradient(#777, #777), linear-gradient(#777, #777); background-size: 1px 100%, 100% 1px; background-repeat: no-repeat; background-position: 12px 0, 0 12px; }
.hruler { width: 1009px; height: 18px; overflow: hidden; background-color: #4a4a4a; border-bottom: 1px solid #1e1e1e; flex: none; }
.hscale { display: flex; height: 17px; margin-left: -40.600px; width: 1200px;
  background-image:
    repeating-linear-gradient(90deg, #7f7f7f 0 1px, transparent 1px 59.100px),
    repeating-linear-gradient(90deg, #6f6f6f 0 1px, transparent 1px 29.550px),
    repeating-linear-gradient(90deg, #6f6f6f 0 1px, transparent 1px 7.388px);
  background-size: 100% 100%, 100% 6px, 100% 3px;
  background-position: 0 0, 0 100%, 0 100%;
  background-repeat: no-repeat; }
.hscale span { width: 59.100px; flex: none; padding: 1px 0 0 3px; font: 10px/13px "Noto Sans", sans-serif; color: #a0a0a0; }
.lane { width: 18px; flex: none; background: #535353; }
.vrow { height: 602px; flex: none; display: flex; }
.vruler { width: 17px; height: 602px; overflow: hidden; background: #4a4a4a; border-right: 1px solid #3a3a3a; flex: none; }
.vscale { height: 700px; margin-top: -8px; padding-top: 0;
  background-image:
    repeating-linear-gradient(180deg, #7f7f7f 0 1px, transparent 1px 59.100px),
    repeating-linear-gradient(180deg, #6f6f6f 0 1px, transparent 1px 29.550px),
    repeating-linear-gradient(180deg, #6f6f6f 0 1px, transparent 1px 14.775px);
  background-size: 100% 100%, 6px 100%, 4px 100%;
  background-position: 0 0, 100% 0, 100% 0;
  background-repeat: no-repeat; }
.vscale span { display: block; height: 59.100px; padding: 2px 0 0 3px; font: 10.500px/11.500px "Liberation Sans", sans-serif; color: #a0a0a0; }
.canvas { position: relative; width: 1009px; height: 602px; background: #282828; overflow: hidden; flex: none; }
.paper { position: absolute; left: 254px; top: 51px; width: 500px; height: 500px; background: #fff; }
.shape { position: absolute; left: 79px; top: 133px; width: 335px; height: 272px; background: #000; }
.hdl { position: absolute; width: 5px; height: 5px; background: #8a8a8a; }
.h1 { left: 331px; top: 182px; } .h2 { left: 666px; top: 182px; } .h3 { left: 331px; top: 454px; } .h4 { left: 666px; top: 454px; }
.gv { position: absolute; top: 0; width: 1px; height: 100%; }
.gh { position: absolute; left: 0; height: 1px; width: 100%; }
.gc { background: #37f2f2; }
.gg { background: rgba(205, 205, 205, .85); }
.x1 { left: 333px; } .x2 { left: 500px; } .x3 { left: 668px; }
.y1 { top: 78px; } .y2 { top: 179px; } .y3 { top: 184px; } .y4 { top: 503px; }
.path-edge { position: absolute; left: 668px; top: 185px; width: 1px; height: 271px; background: #d85a5a; }
.status { height: 17px; flex: none; display: flex; background: #535353; font-size: 9.500px; color: #c4c4c4; }
.zoomv { width: 47px; height: 14px; padding-left: 14px; line-height: 14px; background: #424242; }
.docinfo { width: 184px; height: 16px; display: flex; align-items: center; justify-content: space-between; padding: 0 5px 0 47px; background: #4a4a4a; }

/* dock */
.dock { width: 41px; flex: none; display: flex; flex-direction: column; border-right: 2px solid #3f3f3f; }
.dockstrip { justify-content: flex-end; padding-right: 7px; }
.dgroup { height: 41px; display: flex; flex-direction: column; align-items: center; gap: 5px; padding-top: 4px; border-bottom: 1px solid #3b3b3b; flex: none; }
.dtxt { height: 68px; gap: 0; }
.aglyph { display: flex; align-items: center; font: 19px/28px "Noto Sans", sans-serif; color: #c8c8c8; margin-top: 2px; }
.aglyph i { width: 1px; height: 17px; background: #c8c8c8; margin-left: 1px; }
.pil { font: bold 19px/20px "Liberation Sans", sans-serif; color: #d0d0d0; }

/* panels */
.panels { width: 240px; flex: none; display: flex; flex-direction: column; }
.panstrip { justify-content: flex-end; padding-right: 7px; }
.ptabs { height: 28px; flex: none; display: flex; background: #444; font: bold 10px "Liberation Serif", serif; position: relative; border-bottom: 1px solid #3a3a3a; }
.ptab { display: flex; align-items: center; justify-content: center; color: #a8a8a8; border-right: 1px solid #3a3a3a; }
.pt-color { width: 44px; } .pt-swatch { width: 57px; }
.pt-layers { width: 48px; } .pt-chan { width: 59px; } .pt-paths { width: 44px; }
.ptab.on { background: #535353; color: #f0f0f0; height: 28px; }
.hamb { position: absolute; right: 6px; top: 10px; display: flex; flex-direction: column; gap: 1px; }
.hamb i { width: 10px; height: 1px; background: #cfcfcf; }
.swatches { height: 272px; flex: none; background: #505050; }
.recent { margin: 9px 0 0 4px; width: 227px; height: 18px; padding: 1px 1px; display: flex; gap: 0; background: #3d3d3d; }
.recent i { width: 16px; height: 16px; border-right: 1px solid #3d3d3d; flex: none; }
.swgrid { margin-top: 4px; display: grid; grid-template-columns: repeat(12, 17px); grid-auto-rows: 17px; gap: 1px; width: 216px; }
.splitter { height: 2px; flex: none; background: #2f2f2f; }
.layhead { height: 13px; flex: none; display: flex; justify-content: flex-end; align-items: center; gap: 10px; padding-right: 7px; background: #474747; }
.layhead b { font-size: 8px; color: #c8c8c8; }
.laytabs { height: 28px; padding-top: 1px; }
.laytabs .ptab.on { height: 27px; }
.lay-filter, .lay-blend, .lay-lock { flex: none; display: flex; align-items: center; padding: 0 4px 0 5px; border-bottom: 1px solid #464646; font-size: 10px; }
.lay-filter { height: 31px; padding-top: 5px; }
.f-kind { width: 90px; height: 19px; padding: 0 6px 0 8px; gap: 4px; }
.f-kind .chev { margin-left: auto; }
.kinds { display: flex; align-items: center; gap: 13.500px; margin-left: 10px; color: #d8d8d8; }
.kt { font: bold 14px/14px "Liberation Serif", serif; }
.toggle { position: relative; width: 9px; height: 17px; margin-left: 14px; border: 1px solid #777; border-radius: 5px; }
.toggle i { position: absolute; left: 0; top: -1px; width: 8px; height: 8px; background: #f0f0f0; border-radius: 50%; }
.lay-blend { height: 27px; }
.f-normal { width: 131px; height: 19px; padding: 0 6px 0 8px; justify-content: space-between; }
.op { width: 36px; margin-left: 7px; font-size: 9.500px; letter-spacing: -.4px; white-space: nowrap; }
.lbl2 { color: #bfbfbf; }
.f-pct { width: 53px; height: 19px; margin-left: 4px; }
.f-pct span { width: 36px; text-align: center; }
.f-pct .chev { margin-left: 4px; }
.lay-lock { height: 29px; padding-bottom: 2px; }
.lk { margin-left: 2px; font-size: 9.500px; }
.locks { display: flex; align-items: center; gap: 10px; margin-left: 9px; }
.checker { width: 11px; height: 11px; background: conic-gradient(#888 25%, #555 0 50%, #888 0 75%, #555 0) 0 0/5.500px 5.500px; }
.fl { margin-left: auto; font-size: 9.500px; }
.lay-list { height: 197px; flex: none; display: flex; overflow: hidden; }
.rows { width: 224px; flex: none; }
.lrow { position: relative; display: flex; align-items: center; border-bottom: 1px solid #444; background: #535353; overflow: hidden; }
.group { height: 23px; }
.tall { height: 39px; }
.last { height: 20px; align-items: flex-start; border-bottom: 0; }
.sel { background: #6b6b6b; }
.vis { width: 31px; align-self: stretch; flex: none; display: flex; align-items: center; justify-content: center; border-right: 1px solid #444; background: #535353; }
.vis-end { align-items: flex-end; }
.vis-end .eye { margin-bottom: -5px; }
.vbox { width: 12px; height: 12px; border: 1px solid #4a4a4a; }
.gchev { margin-left: 2px; }
.folder { margin-left: 6px; }
.lname { font: 9.500px "Noto Sans", sans-serif; color: #e8e8e8; margin-top: 1px; }
.lrow .lname { position: absolute; left: 93px; }
.lrow .gname { left: 74px; color: #cfcfcf; }
.thumbwrap { position: relative; margin-left: 19px; width: 32px; height: 32px; border: 1px solid #222; }
.sel-th::before { content: ""; position: absolute; inset: -2px;
  background:
    linear-gradient(#fff, #fff) 0 0/10px 1px no-repeat,
    linear-gradient(#fff, #fff) 100% 0/10px 1px no-repeat,
    linear-gradient(#fff, #fff) 0 100%/10px 1px no-repeat,
    linear-gradient(#fff, #fff) 100% 100%/10px 1px no-repeat,
    linear-gradient(#fff, #fff) 0 0/1px 10px no-repeat,
    linear-gradient(#fff, #fff) 100% 0/1px 10px no-repeat,
    linear-gradient(#fff, #fff) 0 100%/1px 10px no-repeat,
    linear-gradient(#fff, #fff) 100% 100%/1px 10px no-repeat; }
.plain { margin-left: 20px; }
.thumb { width: 100%; height: 100%; overflow: hidden; background: conic-gradient(#ccc 25%, #fff 0 50%, #ccc 0 75%, #fff 0) 0 0/12px 12px; position: relative; }
.blk { position: absolute; left: 5px; top: 8px; width: 21px; height: 21px; background: #000; }
.smark { position: absolute; right: -2px; bottom: -2px; background: #555; width: 14px; height: 14px; display: flex; }
.tglyph { margin-left: 28px; font: 22px/1 "Liberation Serif", serif; color: #c8c8c8; -webkit-text-stroke: .4px #c8c8c8; }
.whitethumb { margin: 3px 0 0 3px; width: 33px; height: 20px; background: #fff; border: 1px solid #222; }
.minilock { position: absolute; left: 197px; top: 14px; }
.lscroll { width: 16px; flex: none; display: flex; flex-direction: column; align-items: center; background: #4b4b4b; padding-top: 11px; gap: 4px; }
.thumbbar { width: 14px; height: 145px; background: #6a6a6a; margin-bottom: 21px; }
.lay-foot { height: 23px; flex: none; display: flex; align-items: center; justify-content: space-between; padding: 0 30px 0 34px; background: #535353; border-top: 1px solid #444; }
.fx { font: italic 15px/15px "Liberation Serif", serif; color: #d0d0d0; }
.adj { display: flex; }
.drop { position: relative; }
.drop::after { content: ""; position: absolute; right: -5px; bottom: -6px; border: 2px solid transparent; border-top: 3px solid #eee; border-bottom: 0; }

/* taskbar */
.taskbar { height: 40px; flex: none; display: flex; background: #02060d; align-items: stretch; }
.tb { width: 48.800px; flex: none; display: flex; align-items: center; justify-content: center; position: relative; }
.act::after { content: ""; position: absolute; left: 4px; right: 5px; bottom: 0; height: 2px; background: #76b9ed; }
.appbox { width: 21px; height: 21px; font: 11px/19px "Noto Sans", sans-serif; text-align: center; background: #02060d; }
.ps { border: 2px solid #00c8ff; color: #7fdcff; }
.ai { border: 2px solid #ff7c00; color: #ff9a33; }
.tray { margin-left: auto; display: flex; align-items: center; gap: 8px; }
.wifi { display: flex; align-items: flex-end; width: 16px; height: 15px; }
.star { font: 10px/11px "Liberation Sans", sans-serif; color: #fff; width: 3px; align-self: flex-start; }
.clock { display: flex; flex-direction: column; align-items: center; width: 52px; font: 13px/17px "Liberation Serif", serif; color: #e8e8e8; margin-left: 6px; }
.showdesk { width: 1px; height: 40px; background: #4d5156; margin: 0 4px 0 1px; }
```
